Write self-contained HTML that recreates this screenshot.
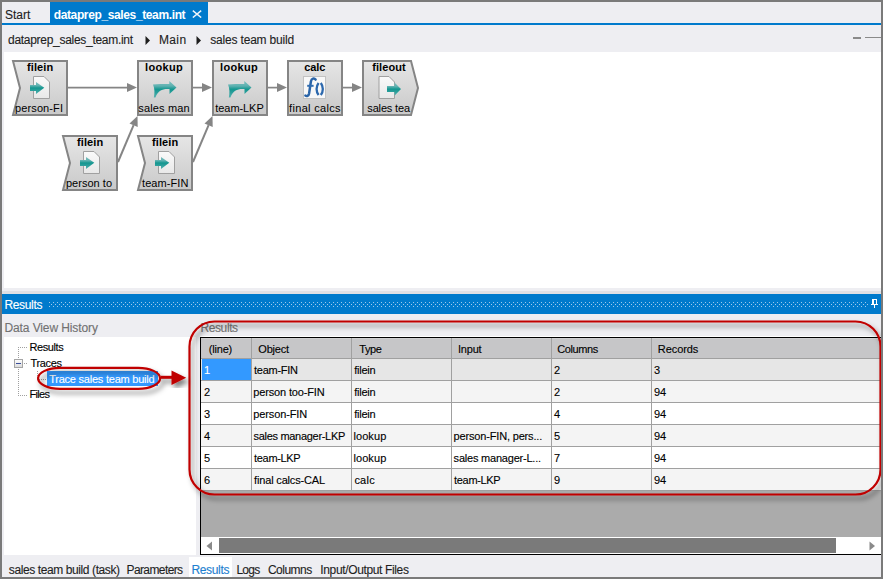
<!DOCTYPE html>
<html><head><meta charset="utf-8">
<style>
*{margin:0;padding:0;box-sizing:border-box}
html,body{width:883px;height:579px;overflow:hidden}
body{position:relative;background:#eeeef2;font-family:"Liberation Sans",sans-serif;font-size:12px;color:#1e1e1e}
.a{position:absolute}
.t{position:absolute;white-space:nowrap;line-height:1;-webkit-text-stroke:0.12px currentColor}
</style></head><body>
<div class="a" style="left:0;top:0;width:883px;height:579px;border:2px solid #7a7a7a;z-index:50"></div>

<div class="t" style="left:5px;top:9px;font-size:12px;letter-spacing:0.00px;color:#1e1e1e;">Start</div>
<div class="a" style="left:50px;top:2px;width:158px;height:23px;background:#007acc"></div>
<div class="t" style="left:53.7px;top:9px;font-size:12px;font-weight:bold;-webkit-text-stroke:0;letter-spacing:-0.37px;color:#ffffff;">dataprep_sales_team.int</div>
<svg class="a" style="left:192px;top:10px" width="10" height="8"><path d="M0.8,0.6 L9.2,7.6 M9.2,0.6 L0.8,7.6" stroke="#eef4fa" stroke-width="1.4"/></svg>
<div class="a" style="left:2px;top:23px;width:879px;height:2px;background:#007acc"></div>

<div class="t" style="left:8px;top:34px;font-size:12px;letter-spacing:-0.29px;color:#1e1e1e;">dataprep_sales_team.int</div>
<svg class="a" style="left:145px;top:36px" width="6" height="9"><path d="M0.5,0 L5,4.5 L0.5,9 Z" fill="#1e1e1e"/></svg>
<div class="t" style="left:158.9px;top:34px;font-size:12px;letter-spacing:0.40px;color:#1e1e1e;">Main</div>
<svg class="a" style="left:196px;top:36px" width="6" height="9"><path d="M0.5,0 L5,4.5 L0.5,9 Z" fill="#1e1e1e"/></svg>
<div class="t" style="left:210.3px;top:34px;font-size:12px;letter-spacing:-0.19px;color:#1e1e1e;">sales team build</div>
<div class="a" style="left:853px;top:37px;width:8px;height:2px;background:#8a8a8a"></div>
<div class="a" style="left:865px;top:37px;width:16px;height:1px;background:#8a8a8a"></div>

<div class="a" style="left:4px;top:52px;width:877px;height:236px;background:#fff"></div>
<svg class="a" style="left:0;top:0" width="883" height="300" viewBox="0 0 883 300">
<defs>
<linearGradient id="bg" x1="0" y1="0" x2="0" y2="1"><stop offset="0" stop-color="#e6e6e6"/><stop offset="1" stop-color="#c9c9c9"/></linearGradient>
<linearGradient id="doc" x1="0" y1="0" x2="0" y2="1"><stop offset="0" stop-color="#fafafa"/><stop offset="1" stop-color="#e8e8e8"/></linearGradient>
<linearGradient id="teal" x1="0" y1="0" x2="0" y2="1"><stop offset="0" stop-color="#7cbfbf"/><stop offset="0.3" stop-color="#5fb1b0"/><stop offset="0.5" stop-color="#13968f"/><stop offset="0.7" stop-color="#2b9f9b"/><stop offset="1" stop-color="#5ab2b0"/></linearGradient>
</defs>
<line x1="68" y1="87.6" x2="128" y2="87.6" stroke="#858585" stroke-width="1.7"/><polygon points="127,83.1 137,87.6 127,92.1" fill="#858585"/>
<line x1="193" y1="87.6" x2="203" y2="87.6" stroke="#858585" stroke-width="1.7"/><polygon points="202,83.1 212,87.6 202,92.1" fill="#858585"/>
<line x1="268" y1="87.6" x2="278" y2="87.6" stroke="#858585" stroke-width="1.7"/><polygon points="277,83.1 287,87.6 277,92.1" fill="#858585"/>
<line x1="343" y1="87.6" x2="353" y2="87.6" stroke="#858585" stroke-width="1.7"/><polygon points="352,83.1 362,87.6 352,92.1" fill="#858585"/>
<line x1="118" y1="162" x2="133.6" y2="125.2" stroke="#858585" stroke-width="2"/><polygon points="137.7,127.0 137.5,116 129.5,123.5" fill="#858585"/>
<line x1="193" y1="162" x2="208.6" y2="125.2" stroke="#858585" stroke-width="2"/><polygon points="212.7,127.0 212.5,116 204.5,123.5" fill="#858585"/>
<polygon points="13,61 67,61 67,115 13,115 20,88" fill="url(#bg)" stroke="#858585" stroke-width="2"/>
<path d="M33.5,76.5 H44 L49.5,82 V98.5 H33.5 Z" fill="url(#doc)" stroke="#a0a0a0" stroke-width="1"/>
<path d="M30,85 H36 V82 L44.3,87.8 L36,94 V91 H30 Z" fill="url(#teal)"/>
<rect x="138" y="61" width="54" height="54" fill="url(#bg)" stroke="#858585" stroke-width="2"/>
<path d="M153,84.5 C158,84 163,84 169.3,84 L169.3,81 L176.5,87.5 L169.5,94 L169.5,89 C163,88.5 158,90 155.5,97.5 L153.8,97.5 C154.8,93 154.8,89 153,84.5 Z" fill="url(#teal)"/>
<rect x="213" y="61" width="54" height="54" fill="url(#bg)" stroke="#858585" stroke-width="2"/>
<path d="M228,84.5 C233,84 238,84 244.3,84 L244.3,81 L251.5,87.5 L244.5,94 L244.5,89 C238,88.5 233,90 230.5,97.5 L228.8,97.5 C229.8,93 229.8,89 228,84.5 Z" fill="url(#teal)"/>
<rect x="288" y="61" width="54" height="54" fill="url(#bg)" stroke="#858585" stroke-width="2"/>
<rect x="303.5" y="76.5" width="22" height="22" fill="#f8f8f8" stroke="#c2c2c2" stroke-width="1"/>
<path d="M315.6,79.6 C314.2,77.8 311.6,78.2 310.9,81.5 L309.1,93.4 C308.6,96 306.6,96.6 305.4,95.6" fill="none" stroke="#2a64a8" stroke-width="2.5" stroke-linecap="round"/>
<path d="M307.2,85.8 H313.6" stroke="#2f6cb0" stroke-width="2"/>
<path d="M318.6,83 C315.9,86.5 315.9,91.5 318.6,95 M320.8,83 C323.5,86.5 323.5,91.5 320.8,95" fill="none" stroke="#2c68ad" stroke-width="2.3"/>
<polygon points="363,61 411,61 418,88 411,115 363,115" fill="url(#bg)" stroke="#858585" stroke-width="2"/>
<path d="M379,76.5 H389 L394.5,82 V98.5 H379 Z" fill="url(#doc)" stroke="#a0a0a0" stroke-width="1"/>
<path d="M387,86 H394.5 V82.5 L401,89 L394.5,95.8 V92 H387 Z" fill="url(#teal)"/>
<polygon points="63,136 117,136 117,190 63,190 70,163" fill="url(#bg)" stroke="#858585" stroke-width="2"/>
<path d="M83.5,151.5 H94 L99.5,157 V173.5 H83.5 Z" fill="url(#doc)" stroke="#a0a0a0" stroke-width="1"/>
<path d="M80,160 H86 V157 L94.3,162.8 L86,169 V166 H80 Z" fill="url(#teal)"/>
<polygon points="138,136 192,136 192,190 138,190 145,163" fill="url(#bg)" stroke="#858585" stroke-width="2"/>
<path d="M158.5,151.5 H169 L174.5,157 V173.5 H158.5 Z" fill="url(#doc)" stroke="#a0a0a0" stroke-width="1"/>
<path d="M155,160 H161 V157 L169.3,162.8 L161,169 V166 H155 Z" fill="url(#teal)"/>
</svg>
<div class="t" style="left:27.1px;top:62px;font-size:11px;font-weight:bold;-webkit-text-stroke:0;letter-spacing:0.08px;color:#000000;-webkit-text-stroke:0;">filein</div>
<div class="t" style="left:15.1px;top:103px;font-size:11px;letter-spacing:0.10px;color:#000000;-webkit-text-stroke:0;">person-FI</div>
<div class="t" style="left:145.1px;top:62px;font-size:11px;font-weight:bold;-webkit-text-stroke:0;letter-spacing:0.32px;color:#000000;-webkit-text-stroke:0;">lookup</div>
<div class="t" style="left:138.3px;top:103px;font-size:11px;letter-spacing:0.15px;color:#000000;-webkit-text-stroke:0;">sales man</div>
<div class="t" style="left:220.1px;top:62px;font-size:11px;font-weight:bold;-webkit-text-stroke:0;letter-spacing:0.32px;color:#000000;-webkit-text-stroke:0;">lookup</div>
<div class="t" style="left:215.3px;top:103px;font-size:11px;letter-spacing:-0.07px;color:#000000;-webkit-text-stroke:0;">team-LKP</div>
<div class="t" style="left:304.2px;top:62px;font-size:11px;font-weight:bold;-webkit-text-stroke:0;letter-spacing:-0.07px;color:#000000;-webkit-text-stroke:0;">calc</div>
<div class="t" style="left:289.1px;top:103px;font-size:11px;letter-spacing:0.32px;color:#000000;-webkit-text-stroke:0;">final calcs</div>
<div class="t" style="left:372.2px;top:62px;font-size:11px;font-weight:bold;-webkit-text-stroke:0;letter-spacing:0.08px;color:#000000;-webkit-text-stroke:0;">fileout</div>
<div class="t" style="left:367.3px;top:103px;font-size:11px;letter-spacing:-0.16px;color:#000000;-webkit-text-stroke:0;">sales tea</div>
<div class="t" style="left:77.1px;top:137px;font-size:11px;font-weight:bold;-webkit-text-stroke:0;letter-spacing:0.08px;color:#000000;-webkit-text-stroke:0;">filein</div>
<div class="t" style="left:65.9px;top:178px;font-size:11px;letter-spacing:0.04px;color:#000000;-webkit-text-stroke:0;">person to</div>
<div class="t" style="left:152.1px;top:137px;font-size:11px;font-weight:bold;-webkit-text-stroke:0;letter-spacing:0.08px;color:#000000;-webkit-text-stroke:0;">filein</div>
<div class="t" style="left:142px;top:178px;font-size:11px;letter-spacing:0.07px;color:#000000;-webkit-text-stroke:0;">team-FIN</div>
<div class="a" style="left:2px;top:291px;width:879px;height:3px;background:#e0e0e4"></div>

<div class="a" style="left:2px;top:294px;width:879px;height:20px;background:#007acc"></div>
<div class="t" style="left:4.4px;top:299px;font-size:12px;letter-spacing:-0.32px;color:#ffffff;">Results</div>
<svg class="a" style="left:48px;top:302px" width="820" height="5"><defs><pattern id="dots" x="0" y="0" width="4" height="4" patternUnits="userSpaceOnUse"><rect x="1" y="0" width="1" height="1" fill="#9fc9ec"/><rect x="3" y="2" width="1" height="1" fill="#9fc9ec"/></pattern></defs><rect width="820" height="5" fill="url(#dots)"/></svg>
<div class="a" style="left:872px;top:299px;width:5px;height:1px;background:#fff"></div>
<div class="a" style="left:872px;top:299px;width:2px;height:5px;background:#fff"></div>
<div class="a" style="left:876px;top:299px;width:1px;height:5px;background:#fff"></div>
<div class="a" style="left:871px;top:304px;width:7px;height:1px;background:#fff"></div>
<div class="a" style="left:874px;top:305px;width:1px;height:3px;background:#fff"></div>

<div class="t" style="left:4.5px;top:322px;font-size:12px;letter-spacing:-0.11px;color:#717171;">Data View History</div>
<div class="a" style="left:4px;top:337px;width:192px;height:218px;background:#fff"></div>
<div class="a" style="left:18px;top:347px;width:1px;height:1px;background:#a0a0a0"></div><div class="a" style="left:18px;top:349px;width:1px;height:1px;background:#a0a0a0"></div><div class="a" style="left:18px;top:351px;width:1px;height:1px;background:#a0a0a0"></div><div class="a" style="left:18px;top:353px;width:1px;height:1px;background:#a0a0a0"></div><div class="a" style="left:18px;top:355px;width:1px;height:1px;background:#a0a0a0"></div><div class="a" style="left:18px;top:357px;width:1px;height:1px;background:#a0a0a0"></div><div class="a" style="left:18px;top:359px;width:1px;height:1px;background:#a0a0a0"></div><div class="a" style="left:18px;top:361px;width:1px;height:1px;background:#a0a0a0"></div><div class="a" style="left:18px;top:363px;width:1px;height:1px;background:#a0a0a0"></div><div class="a" style="left:18px;top:365px;width:1px;height:1px;background:#a0a0a0"></div><div class="a" style="left:18px;top:367px;width:1px;height:1px;background:#a0a0a0"></div><div class="a" style="left:18px;top:369px;width:1px;height:1px;background:#a0a0a0"></div><div class="a" style="left:18px;top:371px;width:1px;height:1px;background:#a0a0a0"></div><div class="a" style="left:18px;top:373px;width:1px;height:1px;background:#a0a0a0"></div><div class="a" style="left:18px;top:375px;width:1px;height:1px;background:#a0a0a0"></div><div class="a" style="left:18px;top:377px;width:1px;height:1px;background:#a0a0a0"></div><div class="a" style="left:18px;top:379px;width:1px;height:1px;background:#a0a0a0"></div><div class="a" style="left:18px;top:381px;width:1px;height:1px;background:#a0a0a0"></div><div class="a" style="left:18px;top:383px;width:1px;height:1px;background:#a0a0a0"></div><div class="a" style="left:18px;top:385px;width:1px;height:1px;background:#a0a0a0"></div><div class="a" style="left:18px;top:387px;width:1px;height:1px;background:#a0a0a0"></div><div class="a" style="left:18px;top:389px;width:1px;height:1px;background:#a0a0a0"></div><div class="a" style="left:18px;top:391px;width:1px;height:1px;background:#a0a0a0"></div><div class="a" style="left:18px;top:393px;width:1px;height:1px;background:#a0a0a0"></div><div class="a" style="left:18px;top:395px;width:1px;height:1px;background:#a0a0a0"></div>
<div class="a" style="left:20px;top:347px;width:1px;height:1px;background:#a0a0a0"></div><div class="a" style="left:22px;top:347px;width:1px;height:1px;background:#a0a0a0"></div><div class="a" style="left:24px;top:347px;width:1px;height:1px;background:#a0a0a0"></div><div class="a" style="left:26px;top:347px;width:1px;height:1px;background:#a0a0a0"></div>
<div class="a" style="left:24px;top:363px;width:1px;height:1px;background:#a0a0a0"></div><div class="a" style="left:26px;top:363px;width:1px;height:1px;background:#a0a0a0"></div>
<div class="a" style="left:20px;top:395px;width:1px;height:1px;background:#a0a0a0"></div><div class="a" style="left:22px;top:395px;width:1px;height:1px;background:#a0a0a0"></div><div class="a" style="left:24px;top:395px;width:1px;height:1px;background:#a0a0a0"></div><div class="a" style="left:26px;top:395px;width:1px;height:1px;background:#a0a0a0"></div>
<div class="a" style="left:37px;top:371px;width:1px;height:1px;background:#a0a0a0"></div><div class="a" style="left:37px;top:373px;width:1px;height:1px;background:#a0a0a0"></div><div class="a" style="left:37px;top:375px;width:1px;height:1px;background:#a0a0a0"></div><div class="a" style="left:37px;top:377px;width:1px;height:1px;background:#a0a0a0"></div><div class="a" style="left:37px;top:379px;width:1px;height:1px;background:#a0a0a0"></div>
<div class="a" style="left:39px;top:379px;width:1px;height:1px;background:#a0a0a0"></div><div class="a" style="left:41px;top:379px;width:1px;height:1px;background:#a0a0a0"></div><div class="a" style="left:43px;top:379px;width:1px;height:1px;background:#a0a0a0"></div><div class="a" style="left:45px;top:379px;width:1px;height:1px;background:#a0a0a0"></div>
<div class="a" style="left:14px;top:359px;width:9px;height:9px;border:1px solid #a5a5a5;background:linear-gradient(#fcfcfc,#dcdcdc)"></div>
<div class="a" style="left:16px;top:363px;width:5px;height:1px;background:#3b4f9a"></div>
<div class="a" style="left:47px;top:371px;width:111px;height:15px;background:#3399ff"></div>
<div class="t" style="left:29.4px;top:342px;font-size:11px;letter-spacing:-0.38px;color:#000000;">Results</div>
<div class="t" style="left:30.4px;top:358px;font-size:11px;letter-spacing:-0.30px;color:#000000;">Traces</div>
<div class="t" style="left:49.2px;top:374px;font-size:11px;letter-spacing:-0.23px;color:#ffffff;">Trace sales team build</div>
<div class="t" style="left:29.4px;top:389px;font-size:11px;letter-spacing:-0.65px;color:#000000;">Files</div>

<div class="t" style="left:200.4px;top:322px;font-size:12px;letter-spacing:-0.38px;color:#767676;">Results</div>
<div class="a" style="left:200px;top:337px;width:681px;height:218px;background:#ababab;border-left:1px solid #000;border-top:1px solid #000;border-bottom:1px solid #000"></div>
<div class="a" style="left:201px;top:338px;width:680px;height:20px;background:#c6c6c8;border-top:1px solid #cfcfd1"></div>
<div class="a" style="left:201px;top:358px;width:680px;height:1px;background:#a0a0a0"></div>
<div class="a" style="left:200px;top:336px;width:681px;height:1px;background:#fff"></div>
<div class="a" style="left:201px;top:359px;width:680px;height:21px;background:#e6e6e6"></div>
<div class="a" style="left:202px;top:359px;width:49px;height:21px;background:#3399ff"></div>
<div class="a" style="left:201px;top:380px;width:680px;height:1px;background:#a0a0a0"></div>
<div class="t" style="left:204.00px;top:365px;font-size:11px;letter-spacing:-0.20px;color:#fff">1</div>
<div class="t" style="left:254.10px;top:365px;font-size:11px;letter-spacing:-0.29px;color:#000">team-FIN</div>
<div class="t" style="left:354.20px;top:365px;font-size:11px;letter-spacing:-0.24px;color:#000">filein</div>
<div class="t" style="left:454.00px;top:365px;font-size:11px;letter-spacing:-0.20px;color:#000"></div>
<div class="t" style="left:554.00px;top:365px;font-size:11px;letter-spacing:-0.20px;color:#000">2</div>
<div class="t" style="left:654.00px;top:365px;font-size:11px;letter-spacing:-0.20px;color:#000">3</div>
<div class="a" style="left:201px;top:381px;width:680px;height:21px;background:#f4f4f4"></div>
<div class="a" style="left:201px;top:402px;width:680px;height:1px;background:#a0a0a0"></div>
<div class="t" style="left:204.00px;top:387px;font-size:11px;letter-spacing:-0.20px;color:#000">2</div>
<div class="t" style="left:253.30px;top:387px;font-size:11px;letter-spacing:-0.15px;color:#000">person too-FIN</div>
<div class="t" style="left:354.20px;top:387px;font-size:11px;letter-spacing:-0.24px;color:#000">filein</div>
<div class="t" style="left:454.00px;top:387px;font-size:11px;letter-spacing:-0.20px;color:#000"></div>
<div class="t" style="left:554.00px;top:387px;font-size:11px;letter-spacing:-0.20px;color:#000">2</div>
<div class="t" style="left:654.00px;top:387px;font-size:11px;letter-spacing:-0.20px;color:#000">94</div>
<div class="a" style="left:201px;top:403px;width:680px;height:21px;background:#ffffff"></div>
<div class="a" style="left:201px;top:424px;width:680px;height:1px;background:#a0a0a0"></div>
<div class="t" style="left:204.00px;top:409px;font-size:11px;letter-spacing:-0.20px;color:#000">3</div>
<div class="t" style="left:253.30px;top:409px;font-size:11px;letter-spacing:-0.12px;color:#000">person-FIN</div>
<div class="t" style="left:354.20px;top:409px;font-size:11px;letter-spacing:-0.24px;color:#000">filein</div>
<div class="t" style="left:454.00px;top:409px;font-size:11px;letter-spacing:-0.20px;color:#000"></div>
<div class="t" style="left:554.00px;top:409px;font-size:11px;letter-spacing:-0.20px;color:#000">4</div>
<div class="t" style="left:654.00px;top:409px;font-size:11px;letter-spacing:-0.20px;color:#000">94</div>
<div class="a" style="left:201px;top:425px;width:680px;height:21px;background:#f4f4f4"></div>
<div class="a" style="left:201px;top:446px;width:680px;height:1px;background:#a0a0a0"></div>
<div class="t" style="left:204.00px;top:431px;font-size:11px;letter-spacing:-0.20px;color:#000">4</div>
<div class="t" style="left:253.50px;top:431px;font-size:11px;letter-spacing:-0.30px;color:#000">sales manager-LKP</div>
<div class="t" style="left:353.40px;top:431px;font-size:11px;letter-spacing:0.10px;color:#000">lookup</div>
<div class="t" style="left:453.60px;top:431px;font-size:11px;letter-spacing:-0.17px;color:#000">person-FIN, pers...</div>
<div class="t" style="left:554.00px;top:431px;font-size:11px;letter-spacing:-0.20px;color:#000">5</div>
<div class="t" style="left:654.00px;top:431px;font-size:11px;letter-spacing:-0.20px;color:#000">94</div>
<div class="a" style="left:201px;top:447px;width:680px;height:21px;background:#ffffff"></div>
<div class="a" style="left:201px;top:468px;width:680px;height:1px;background:#a0a0a0"></div>
<div class="t" style="left:204.00px;top:453px;font-size:11px;letter-spacing:-0.20px;color:#000">5</div>
<div class="t" style="left:254.10px;top:453px;font-size:11px;letter-spacing:-0.33px;color:#000">team-LKP</div>
<div class="t" style="left:353.40px;top:453px;font-size:11px;letter-spacing:0.10px;color:#000">lookup</div>
<div class="t" style="left:453.60px;top:453px;font-size:11px;letter-spacing:-0.21px;color:#000">sales manager-L...</div>
<div class="t" style="left:554.00px;top:453px;font-size:11px;letter-spacing:-0.20px;color:#000">7</div>
<div class="t" style="left:654.00px;top:453px;font-size:11px;letter-spacing:-0.20px;color:#000">94</div>
<div class="a" style="left:201px;top:469px;width:680px;height:21px;background:#f4f4f4"></div>
<div class="a" style="left:201px;top:490px;width:680px;height:1px;background:#a0a0a0"></div>
<div class="t" style="left:204.00px;top:475px;font-size:11px;letter-spacing:-0.20px;color:#000">6</div>
<div class="t" style="left:254.10px;top:475px;font-size:11px;letter-spacing:-0.17px;color:#000">final calcs-CAL</div>
<div class="t" style="left:354.40px;top:475px;font-size:11px;letter-spacing:0.23px;color:#000">calc</div>
<div class="t" style="left:454.10px;top:475px;font-size:11px;letter-spacing:-0.33px;color:#000">team-LKP</div>
<div class="t" style="left:554.00px;top:475px;font-size:11px;letter-spacing:-0.20px;color:#000">9</div>
<div class="t" style="left:654.00px;top:475px;font-size:11px;letter-spacing:-0.20px;color:#000">94</div>
<div class="a" style="left:251px;top:338px;width:1px;height:153px;background:#a0a0a0"></div>
<div class="a" style="left:351px;top:338px;width:1px;height:153px;background:#a0a0a0"></div>
<div class="a" style="left:451px;top:338px;width:1px;height:153px;background:#a0a0a0"></div>
<div class="a" style="left:551px;top:338px;width:1px;height:153px;background:#a0a0a0"></div>
<div class="a" style="left:651px;top:338px;width:1px;height:153px;background:#a0a0a0"></div>
<div class="t" style="left:208.7px;top:344px;font-size:11px;letter-spacing:-0.18px;color:#000000;">(line)</div>
<div class="t" style="left:258.3px;top:344px;font-size:11px;letter-spacing:-0.22px;color:#000000;">Object</div>
<div class="t" style="left:359.3px;top:344px;font-size:11px;letter-spacing:-0.43px;color:#000000;">Type</div>
<div class="t" style="left:458px;top:344px;font-size:11px;letter-spacing:-0.20px;color:#000000;">Input</div>
<div class="t" style="left:557.3px;top:344px;font-size:11px;letter-spacing:-0.40px;color:#000000;">Columns</div>
<div class="t" style="left:657.8px;top:344px;font-size:11px;letter-spacing:-0.07px;color:#000000;">Records</div>
<div class="a" style="left:201px;top:537px;width:680px;height:17px;background:#fff"></div>
<div class="a" style="left:219px;top:538px;width:617px;height:15px;background:#7a7a7a"></div>
<svg class="a" style="left:206px;top:541px" width="7" height="10"><path d="M6,0.5 L0.5,5 L6,9.5 Z" fill="#8a8a8a"/></svg>
<svg class="a" style="left:869px;top:541px" width="7" height="10"><path d="M0.5,0.5 L6,5 L0.5,9.5 Z" fill="#8a8a8a"/></svg>

<div class="a" style="left:189px;top:557px;width:43px;height:20px;background:#fff"></div>
<div class="t" style="left:8.8px;top:564px;font-size:12px;letter-spacing:-0.40px;color:#1e1e1e;">sales team build (task)</div>
<div class="t" style="left:126.5px;top:564px;font-size:12px;letter-spacing:-0.60px;color:#1e1e1e;">Parameters</div>
<div class="t" style="left:191.4px;top:564px;font-size:12px;letter-spacing:-0.32px;color:#1e7fd0;">Results</div>
<div class="t" style="left:236.4px;top:564px;font-size:12px;letter-spacing:-0.70px;color:#1e1e1e;">Logs</div>
<div class="t" style="left:267.9px;top:564px;font-size:12px;letter-spacing:-0.50px;color:#1e1e1e;">Columns</div>
<div class="t" style="left:320.3px;top:564px;font-size:12px;letter-spacing:-0.36px;color:#1e1e1e;">Input/Output Files</div>
<svg class="a" style="left:0;top:0;z-index:10" width="883" height="579">
<defs><filter id="sh" x="-20%" y="-20%" width="140%" height="140%"><feDropShadow dx="3" dy="4" stdDeviation="2.5" flood-color="#000" flood-opacity="0.5"/></filter></defs>
<g filter="url(#sh)" fill="none" stroke="#c00000" stroke-width="2.2">
<rect x="189.5" y="321.5" width="691" height="173" rx="25" ry="25"/>
<rect x="38.1" y="367.8" width="122" height="21" rx="22" ry="10.5" stroke-width="2.2"/>
</g>
<g filter="url(#sh)">
<rect x="161" y="375.8" width="11" height="3" fill="#c00000"/>
<polygon points="171.5,370.5 186.2,377.7 171.5,385" fill="#c00000"/>
</g>
</svg>
</body></html>
